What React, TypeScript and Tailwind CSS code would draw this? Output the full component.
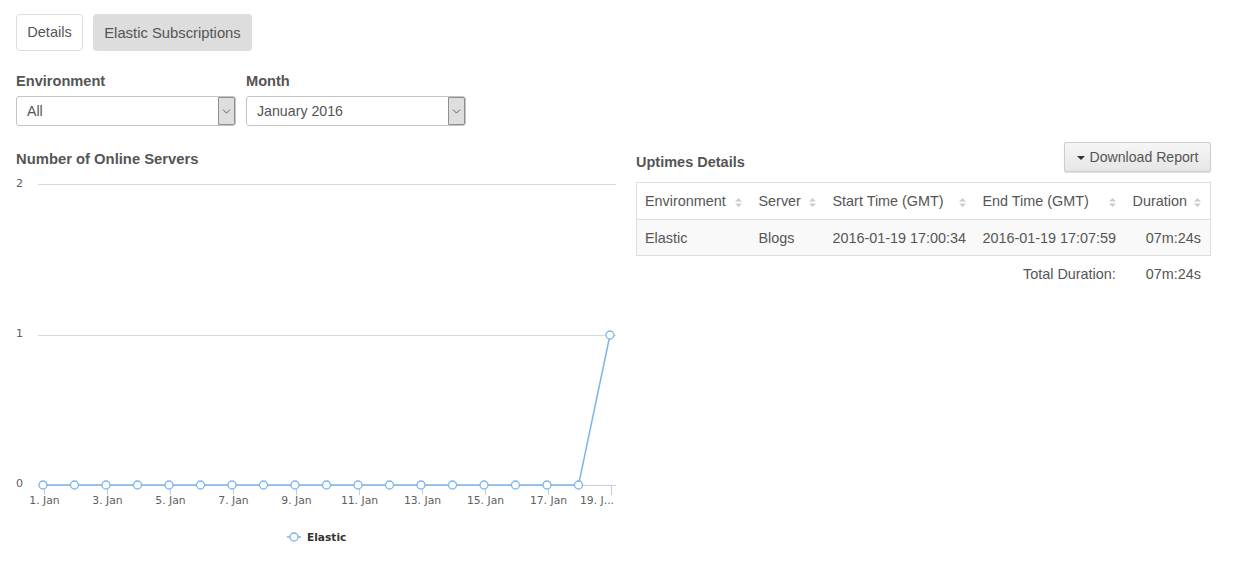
import { ChevronDown } from 'lucide-react';

const points = Array.from({ length: 19 }, (_, i) => 27 + i * 31.5);
const ticks = [
  [1, '1. Jan'],
  [3, '3. Jan'],
  [5, '5. Jan'],
  [7, '7. Jan'],
  [9, '9. Jan'],
  [11, '11. Jan'],
  [13, '13. Jan'],
  [15, '15. Jan'],
  [17, '17. Jan'],
  [19, '19. J...'],
] as const;

function FakeSelect({ label, value, width }: { label: string; value: string; width: string }) {
  return (
    <div className={width}>
      <div className="mb-[5px] text-[14.6px] leading-[20px] font-bold text-[#555]">{label}</div>
      <div className="flex h-[30px] items-stretch justify-between rounded-[3px] border border-[#c4c4c4] bg-white">
        <span className="pl-[10px] text-[14.2px] leading-[28px] text-[#555]">{value}</span>
        <span className="flex w-[17px] items-center justify-center rounded-r-[2px] border border-[#8f8f8f] bg-[#dedede] text-[#444]">
          <ChevronDown size={13} strokeWidth={1.5} />
        </span>
      </div>
    </div>
  );
}

function SortHeader({ label, className }: { label: string; className: string }) {
  return (
    <th className={`h-[37px] border-b border-[#ddd] px-0 pt-[2px] text-left font-normal ${className}`}>
      <div className="flex items-center justify-between">
        <span>{label}</span>
        <svg width="9" height="11" viewBox="0 0 9 11" className="mt-[1px]">
          <path d="M4.5 1 L8 4.5 H1 Z M4.5 10 L8 6.5 H1 Z" fill="#ccc" />
        </svg>
      </div>
    </th>
  );
}

function Chart() {
  return (
    <svg width="600" height="385" className="block" fontFamily="'DejaVu Sans', sans-serif">
      <line x1="22" y1="12.5" x2="600" y2="12.5" stroke="#d8d8d8" />
      <line x1="22" y1="163.5" x2="600" y2="163.5" stroke="#d8d8d8" />
      <line x1="22" y1="313.5" x2="600" y2="313.5" stroke="#c0d0e0" />
      <g fontSize="11" fill="#606060">
        <text x="0" y="15">2</text>
        <text x="0" y="165">1</text>
        <text x="0" y="315">0</text>
      </g>
      {ticks.map(([day, label]) => (
        <g key={day}>
          <line
            x1={28.5 + (day - 1) * 31.5}
            x2={28.5 + (day - 1) * 31.5}
            y1="314"
            y2="323"
            stroke="#c0d0e0"
          />
          <text
            x={day === 19 ? 581 : 28.5 + (day - 1) * 31.5}
            y="332"
            fontSize="10.8"
            fill="#606060"
            textAnchor="middle"
          >
            {label}
          </text>
        </g>
      ))}
      <polyline
        points={points.map((x, i) => `${x},${i === 18 ? 163 : 313}`).join(' ')}
        fill="none"
        stroke="#7cb5ec"
        strokeWidth="1.5"
      />
      {points.map((x, i) => (
        <circle key={x} cx={x} cy={i === 18 ? 163 : 313} r="4" fill="#fff" stroke="#7cb5ec" strokeWidth="1.3" />
      ))}
      <line x1="271" y1="365" x2="285" y2="365" stroke="#7cb5ec" strokeWidth="1.5" />
      <circle cx="278" cy="365" r="4" fill="#fff" stroke="#7cb5ec" strokeWidth="1.3" />
      <text x="291" y="369" fontSize="10.6" fontWeight="bold" fill="#333">
        Elastic
      </text>
    </svg>
  );
}

export default function App() {
  return (
    <div className="h-[570px] w-[1246px] overflow-hidden bg-white px-[16px] pt-[14px] font-['Liberation_Sans',sans-serif] text-[14.4px] text-[#555]">
      <div className="flex gap-[10px]">
        <button className="h-[37px] w-[67px] rounded-[4px] border border-[#ddd] bg-white pt-[1px] text-[14.6px]">Details</button>
        <button className="h-[37px] w-[159px] rounded-[4px] bg-[#ddd] pt-[1px] text-[14.8px]">Elastic Subscriptions</button>
      </div>

      <div className="mt-[20px] flex gap-[10px]">
        <FakeSelect label="Environment" value="All" width="w-[220px]" />
        <FakeSelect label="Month" value="January 2016" width="w-[220px]" />
      </div>

      <div className="mt-[16px] flex">
        <div className="w-[620px]">
          <div className="h-[30px] pt-[7px] text-[14.8px] leading-[20px] font-bold text-[#555]">
            Number of Online Servers
          </div>
          <Chart />
        </div>

        <div className="w-[575px]">
          <div className="flex h-[40px] items-start justify-between">
            <div className="pt-[10px] text-[14.5px] leading-[20px] font-bold">Uptimes Details</div>
            <button className="flex h-[30px] w-[147px] items-center justify-center gap-[5px] rounded-[2px] border border-[#ccc] bg-gradient-to-b from-[#f6f6f6] to-[#e6e6e6] pt-[1px] text-[14.1px] shadow-[0_1px_1px_rgba(0,0,0,0.12)]">
              <svg width="8" height="4" viewBox="0 0 8 4">
                <path d="M0 0 H8 L4 4 Z" fill="#333" />
              </svg>
              Download Report
            </button>
          </div>

          <table className="w-[575px] table-fixed border-collapse border border-[#ddd]">
            <thead>
              <tr>
                <SortHeader label="Environment" className="w-[122px] pl-[8px] pr-[16px]" />
                <SortHeader label="Server" className="w-[74px] pr-[16px]" />
                <SortHeader label="Start Time (GMT)" className="w-[150px] pr-[16px]" />
                <SortHeader label="End Time (GMT)" className="w-[150px] pr-[16px]" />
                <SortHeader label="Duration" className="pr-[8px]" />
              </tr>
            </thead>
            <tbody>
              <tr className="h-[36px] border-b border-[#ddd] bg-[#f9f9f9]">
                <td className="pl-[8px] pt-[3px]">Elastic</td>
                <td className="pt-[3px]">Blogs</td>
                <td className="pt-[3px]">2016-01-19 17:00:34</td>
                <td className="pt-[3px]">2016-01-19 17:07:59</td>
                <td className="pr-[9px] pt-[3px] text-right">07m:24s</td>
              </tr>
            </tbody>
          </table>

          <div className="mt-[8px] flex justify-end pr-[10px] leading-[20px]">
            <span>Total Duration:</span>
            <span className="ml-[30px]">07m:24s</span>
          </div>
        </div>
      </div>
    </div>
  );
}
